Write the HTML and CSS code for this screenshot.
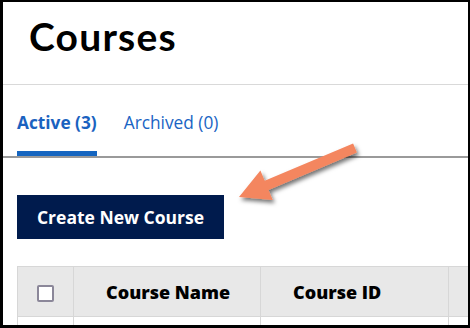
FILE: index.html
```html
<!DOCTYPE html>
<html>
<head>
<meta charset="utf-8">
<link rel="stylesheet" href="styles.css">
</head>
<body>
<div class="frame">
  <div class="page">
    <header class="title-bar">
      <h1 class="title">Courses</h1>
    </header>
    <nav class="tabs">
      <a class="tab active">Active (3)</a>
      <a class="tab">Archived (0)</a>
    </nav>
    <div class="actions">
      <button class="btn-create">Create New Course</button>
    </div>
    <table class="grid">
      <colgroup>
        <col class="col-check">
        <col class="col-name">
        <col class="col-id">
        <col class="col-more">
      </colgroup>
      <thead>
        <tr>
          <th class="th-check"><span class="checkbox"></span></th>
          <th>Course Name</th>
          <th>Course ID</th>
          <th></th>
        </tr>
      </thead>
      <tbody>
        <tr><td></td><td></td><td></td><td></td></tr>
      </tbody>
    </table>
    <svg class="arrow" width="140" height="80" viewBox="230 135 140 80">
      <defs>
        <filter id="sh" x="-20%" y="-20%" width="150%" height="160%">
          <feDropShadow dx="2" dy="3" stdDeviation="2" flood-color="#000" flood-opacity="0.55"/>
        </filter>
      </defs>
      <polygon filter="url(#sh)" fill="#f4865f" points="353.1,143.4 356.9,152.6 268.5,189.9 272.8,200 239,197 260.4,170.6 264.7,180.7"/>
    </svg>
  </div>
</div>
</body>
</html>
```
FILE: styles.css
```css
html, body {
  margin: 0;
  padding: 0;
  background: #000;
}
.frame {
  width: 470px;
  height: 328px;
  box-sizing: border-box;
  padding: 2px 2px 3px 3px;
  background: #000;
}
.page {
  position: relative;
  width: 465px;
  height: 323px;
  background: #fff;
  overflow: hidden;
  font-family: "Open Sans", sans-serif;
}
.title-bar {
  height: 82px;
  border-bottom: 1px solid #d9d9d9;
  box-sizing: content-box;
}
.title {
  margin: 0;
  padding: 12px 0 0 26px;
  font-family: Lato, sans-serif;
  font-weight: 700;
  font-size: 39px;
  letter-spacing: 1.2px;
  line-height: 44px;
  color: #000;
}
.tabs {
  display: flex;
  gap: 27px;
  padding: 0 0 0 14px;
  height: 71px;
  border-bottom: 2px solid #9a9a9a;
  box-sizing: content-box;
}
.tab {
  display: block;
  padding-top: 27px;
  font-size: 17.3px;
  line-height: 22px;
  color: #1a64c4;
  box-sizing: border-box;
  height: 71px;
}
.tab.active {
  font-weight: 700;
  color: #1a62c0;
  border-bottom: 5px solid #1565c0;
}
.actions {
  padding: 37px 0 0 14px;
  height: 70px;
  box-sizing: border-box;
}
.btn-create {
  height: 44px;
  width: 207px;
  border: 0;
  background: #001b4d;
  color: #fff;
  font-family: "Open Sans", sans-serif;
  font-weight: 700;
  font-size: 17.5px;
  padding: 0;
}
.grid {
  margin: 38px 0 0 14px;
  border-collapse: collapse;
  table-layout: fixed;
  width: 520px;
}
.col-check { width: 56px; }
.col-name { width: 187px; }
.col-id { width: 188px; }
.col-more { width: 89px; }
.grid th {
  background: #e8e8e8;
  height: 49px;
  border: 1px solid #d7d7d7;
  font-size: 18px;
  font-weight: 800;
  color: #000;
  text-align: left;
  padding: 0 0 0 32px;
}
.grid th.th-check {
  text-align: center;
  padding: 0;
}
.grid td {
  height: 20px;
  border: 1px solid #d7d7d7;
  border-bottom: 0;
}
.checkbox {
  display: inline-block;
  width: 13px;
  height: 13px;
  border: 2px solid #8b8799;
  border-radius: 2px;
  background: #fff;
  vertical-align: middle;
}
.arrow {
  position: absolute;
  left: 227px;
  top: 133px;
}
```
